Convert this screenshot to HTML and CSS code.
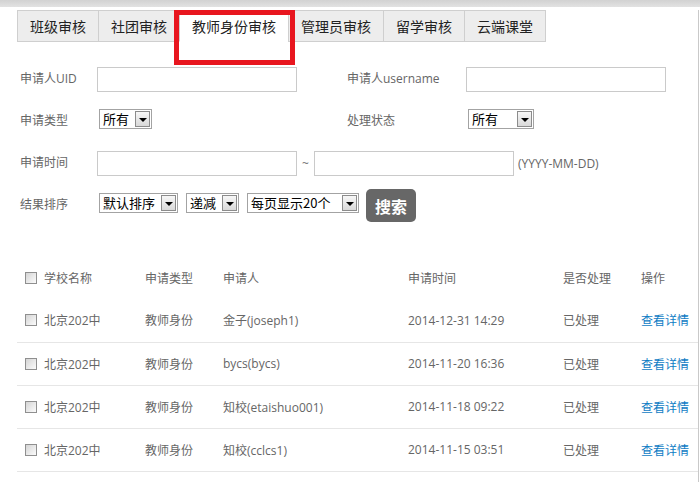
FILE: index.html
```html
<!DOCTYPE html>
<html lang="zh-CN">
<head>
<meta charset="utf-8">
<title>教师身份审核</title>
<link rel="stylesheet" href="styles.css">
</head>
<body>
<div class="topbar"></div>
<div class="page">
  <nav class="tabs">
    <a class="tab">班级审核</a>
    <a class="tab">社团审核</a>
    <a class="tab active">教师身份审核</a>
    <a class="tab">管理员审核</a>
    <a class="tab">留学审核</a>
    <a class="tab">云端课堂</a>
  </nav>
  <div class="highlight"></div>

  <form class="filters">
    <div class="row">
      <label class="lbl">申请人UID</label>
      <div class="field"><input class="txt" type="text"></div>
      <label class="lbl lbl2">申请人username</label>
      <div class="field"><input class="txt" type="text"></div>
    </div>
    <div class="row">
      <label class="lbl">申请类型</label>
      <div class="field"><span class="sel w53"><span class="sel-val">所有</span><span class="sel-btn"></span></span></div>
      <label class="lbl lbl2">处理状态</label>
      <div class="field"><span class="sel w66"><span class="sel-val">所有</span><span class="sel-btn"></span></span></div>
    </div>
    <div class="row">
      <label class="lbl">申请时间</label>
      <input class="txt" type="text">
      <span class="tilde">~</span>
      <input class="txt" type="text">
      <span class="hint">(YYYY-MM-DD)</span>
    </div>
    <div class="row">
      <label class="lbl">结果排序</label>
      <span class="sel w79"><span class="sel-val">默认排序</span><span class="sel-btn"></span></span>
      <span class="sel w53 gap"><span class="sel-val">递减</span><span class="sel-btn"></span></span>
      <span class="sel w112 gap"><span class="sel-val">每页显示20个</span><span class="sel-btn"></span></span>
      <button class="search" type="button">搜索</button>
    </div>
  </form>

  <table class="list">
    <colgroup>
      <col class="c1"><col class="c2"><col class="c3"><col class="c4"><col class="c5"><col class="c6">
    </colgroup>
    <thead>
      <tr>
        <th class="first"><span class="cb"></span>学校名称</th>
        <th>申请类型</th>
        <th>申请人</th>
        <th>申请时间</th>
        <th>是否处理</th>
        <th>操作</th>
      </tr>
    </thead>
    <tbody>
      <tr>
        <td class="first"><span class="cb"></span>北京202中</td>
        <td>教师身份</td>
        <td>金子(joseph1)</td>
        <td>2014-12-31 14:29</td>
        <td>已处理</td>
        <td><a class="link">查看详情</a></td>
      </tr>
      <tr>
        <td class="first"><span class="cb"></span>北京202中</td>
        <td>教师身份</td>
        <td>bycs(bycs)</td>
        <td>2014-11-20 16:36</td>
        <td>已处理</td>
        <td><a class="link">查看详情</a></td>
      </tr>
      <tr>
        <td class="first"><span class="cb"></span>北京202中</td>
        <td>教师身份</td>
        <td>知校(etaishuo001)</td>
        <td>2014-11-18 09:22</td>
        <td>已处理</td>
        <td><a class="link">查看详情</a></td>
      </tr>
      <tr>
        <td class="first"><span class="cb"></span>北京202中</td>
        <td>教师身份</td>
        <td>知校(cclcs1)</td>
        <td>2014-11-15 03:51</td>
        <td>已处理</td>
        <td><a class="link">查看详情</a></td>
      </tr>
    </tbody>
  </table>
</div>
</body>
</html>
```
FILE: styles.css
```css
* { box-sizing: border-box; }

html, body {
  margin: 0;
  padding: 0;
  background: #fff;
}

body {
  font-family: "Open Sans", "Noto Sans CJK SC", sans-serif;
  font-size: 12px;
  color: #666;
  width: 700px;
  height: 482px;
  overflow: hidden;
}

.topbar {
  height: 7px;
  background: linear-gradient(to bottom, #d2d2d2, #e2e2e2);
}

.page {
  position: relative;
  width: 699px;
  height: 475px;
  border-right: 1px solid #c9c9c9;
}

/* tabs */
.tabs {
  display: flex;
  margin: 3px 0 0 17px;
}

.tab {
  display: block;
  height: 32px;
  line-height: 30px;
  padding: 0 12px;
  border: 1px solid #cfcfcf;
  margin-left: -1px;
  background: #ededed;
  color: #222;
  font-size: 14px;
  font-family: "Noto Sans CJK SC", sans-serif;
}

.tab:first-child { margin-left: 0; }

.tab.active {
  background: #fff;
  border-bottom-color: #fff;
}

.highlight {
  position: absolute;
  left: 174px;
  top: 0;
  width: 121px;
  height: 55px;
  border: 5px solid #e8161f;
}

/* filters */
.filters {
  margin-top: 25px;
  padding-left: 20px;
}

.row {
  display: flex;
  align-items: flex-start;
  height: 42px;
}

.lbl {
  width: 77px;
  margin-top: 2px;
  line-height: 20px;
  color: #666;
  font-size: 12px;
  flex: none;
}

.lbl2 {
  margin-left: 50px;
  width: 119px;
}

.field {
  width: 200px;
  flex: none;
}

.txt {
  display: block;
  width: 200px;
  height: 25px;
  border: 1px solid #cacaca;
  margin: 0;
  padding: 0 4px;
  background: #fff;
  flex: none;
}

.tilde {
  width: 17px;
  text-align: center;
  line-height: 25px;
  color: #777;
}

.hint {
  margin-left: 4px;
  line-height: 25px;
  color: #666;
}

.sel {
  display: inline-flex;
  align-items: center;
  height: 20px;
  margin-left: 2px;
  border: 1px solid #a3a3a3;
  background: #fff;
  flex: none;
  vertical-align: top;
}

.sel.gap { margin-left: 8px; }

.w53 { width: 53px; }
.w66 { width: 66px; }
.w79 { width: 79px; }
.w112 { width: 112px; }

.sel-val {
  flex: 1;
  padding-left: 3px;
  font-size: 13px;
  line-height: 18px;
  color: #000;
  font-family: "Noto Sans CJK SC", sans-serif;
  white-space: nowrap;
  overflow: hidden;
}

.sel-btn {
  position: relative;
  width: 15px;
  height: 16px;
  margin-right: 1px;
  border: 1px solid #8c8c8c;
  background: linear-gradient(to bottom, #f7f7f7, #d9d9d9);
  flex: none;
}

.sel-btn::after {
  content: "";
  position: absolute;
  left: 3px;
  top: 6px;
  border-left: 4px solid transparent;
  border-right: 4px solid transparent;
  border-top: 4px solid #000;
}

.search {
  margin: -4px 0 0 7px;
  width: 50px;
  height: 33px;
  border: 0;
  border-radius: 5px;
  background: #676767;
  color: #fff;
  font-family: "Noto Sans CJK SC", sans-serif;
  font-size: 16px;
  font-weight: bold;
  padding: 0;
  flex: none;
}

/* table */
.list {
  margin: 22px 0 0 17px;
  width: 681px;
  border-collapse: collapse;
  table-layout: fixed;
}

.c1 { width: 128px; }
.c2 { width: 78px; }
.c3 { width: 185px; }
.c4 { width: 155px; }
.c5 { width: 78px; }
.c6 { width: 57px; }

.list th,
.list td {
  padding: 0;
  text-align: left;
  font-weight: normal;
  font-size: 12px;
  color: #666;
  white-space: nowrap;
  vertical-align: middle;
}

.list th { height: 42px; }

.list td {
  height: 43px;
  border-bottom: 1px solid #e6e6e6;
}

.list .first { padding-left: 8px; }

.cb {
  display: inline-block;
  width: 12px;
  height: 12px;
  margin-right: 7px;
  border: 1px solid #8f8f8f;
  background: linear-gradient(135deg, #d5d5d5, #fbfbfb);
  vertical-align: -1px;
}

.link {
  color: #0f7cc4;
  text-decoration: none;
}
```
